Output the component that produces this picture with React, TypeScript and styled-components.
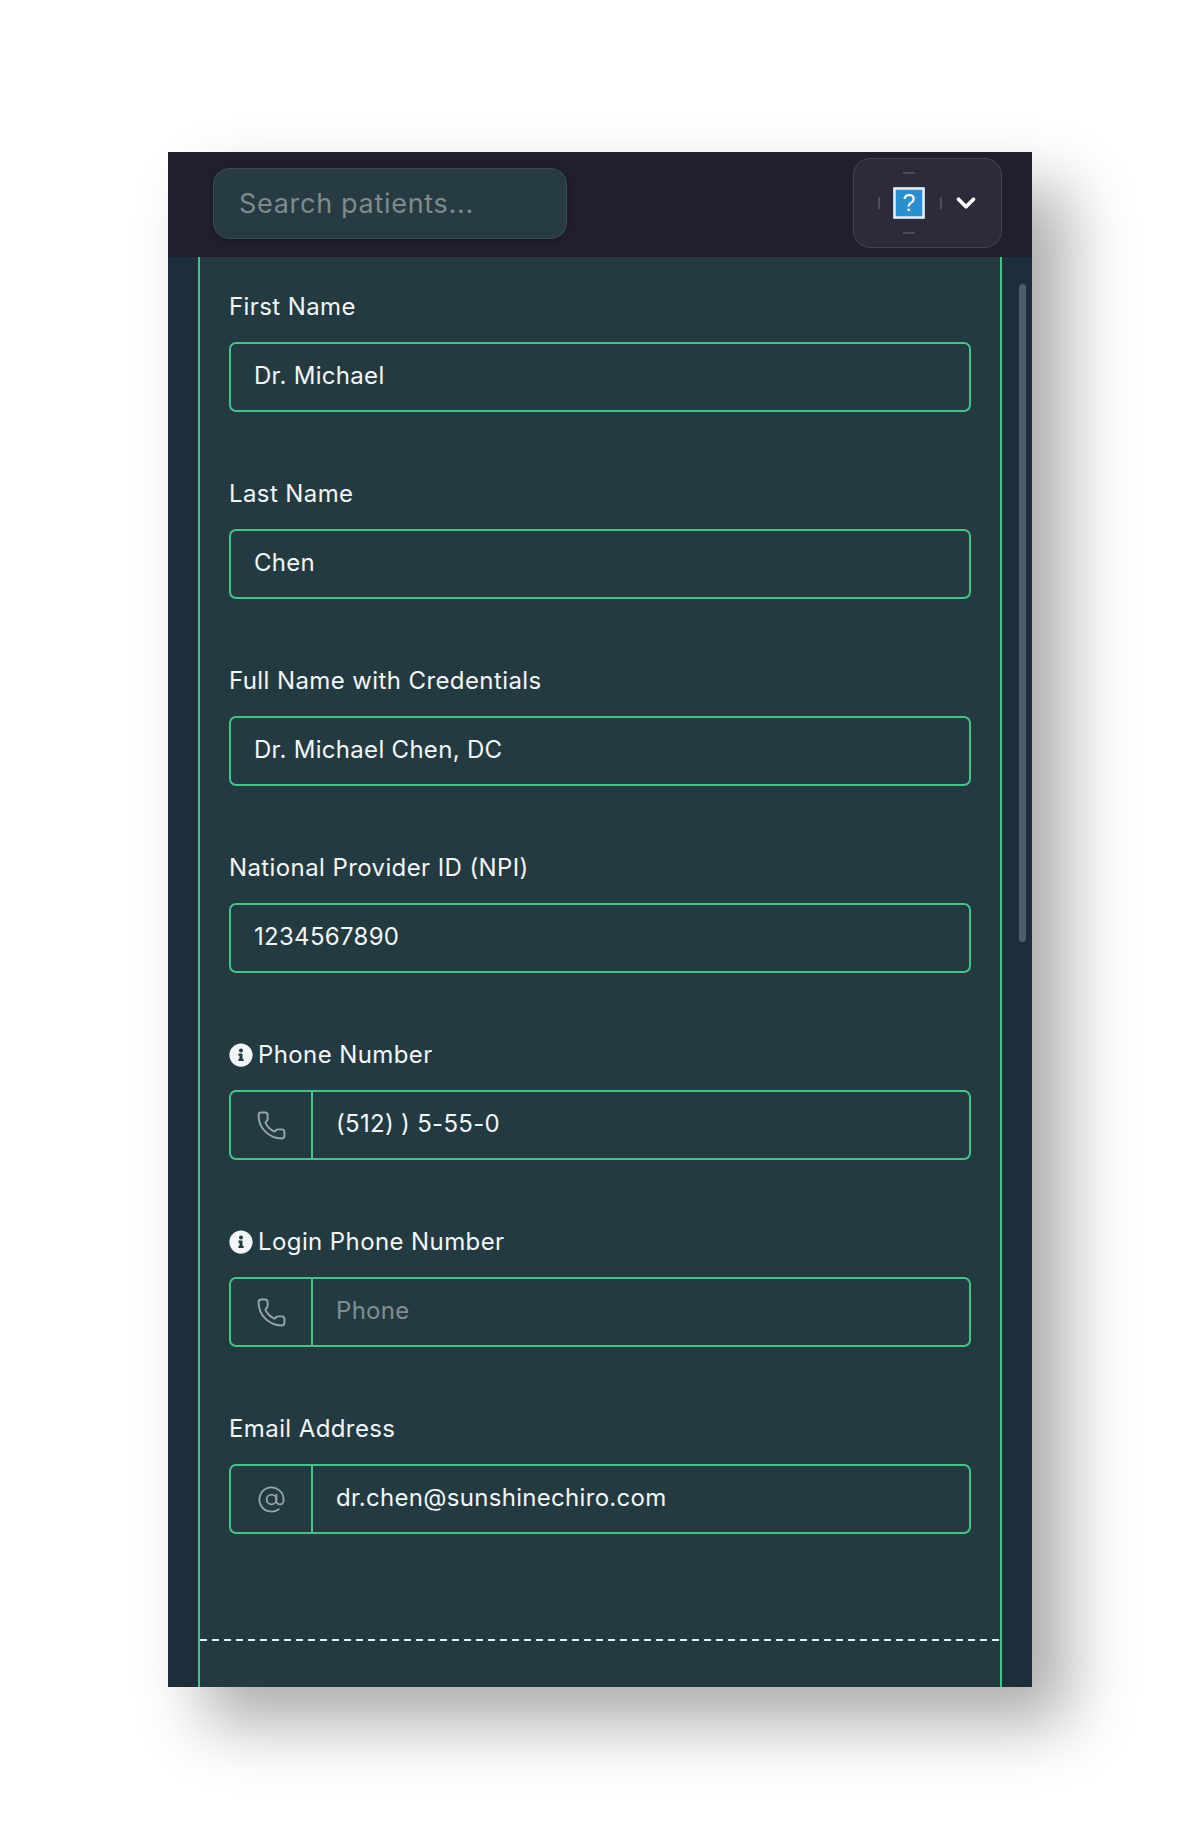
import React from "react";
import styled, { createGlobalStyle } from "styled-components";
import { Phone, AtSign, ChevronDown } from "lucide-react";
import { FaInfoCircle } from "react-icons/fa";

const Global = createGlobalStyle`
  html, body { margin: 0; padding: 0; background: #fff; }
  body { font-family: Inter, "Liberation Sans", sans-serif; }
`;
const Page = styled.div`
  width: 1200px;
  height: 1840px;
  padding: 152px 168px 0;
  box-sizing: border-box;
  overflow: hidden;
`;
const Frame = styled.div`
  width: 864px;
  height: 1535px;
  display: flex;
  flex-direction: column;
  box-shadow: 36px 36px 62px rgba(0, 0, 0, 0.33);
  background: #1b2e39;
`;
const TopBar = styled.header`
  height: 105px;
  flex: none;
  background: #1f1f2f;
  display: flex;
  align-items: center;
  justify-content: space-between;
  padding: 0 30px 0 45px;
  box-sizing: border-box;
`;
const Search = styled.input`
  width: 354px;
  height: 71px;
  margin-bottom: 2px;
  box-sizing: border-box;
  background: #263c42;
  border: 1px solid #3a4a50;
  border-radius: 16px;
  padding: 0 25px;
  color: #e8eeee;
  font: 400 27px Inter, sans-serif;
  letter-spacing: 0.7px;
  box-shadow: 0 2px 6px rgba(0, 0, 0, 0.2);
  &::placeholder { color: #808a8b; opacity: 1; }
`;
const UserButton = styled.div`
  width: 149px;
  height: 90px;
  margin-bottom: 3px;
  box-sizing: border-box;
  background: #2b2b3b;
  border: 1px solid #42424f;
  border-radius: 17px;
  display: flex;
  align-items: center;
  padding-left: 22px;
  gap: 9px;
  color: #fff;
`;
const Avatar = styled.svg`
  width: 66px;
  height: 66px;
  flex: none;
`;
const Main = styled.div`
  flex: 1;
  min-height: 0;
  display: flex;
`;
const Gutter = styled.div`
  width: 30px;
  flex: none;
  display: flex;
  justify-content: flex-end;
  padding: 27px 6px 0 0;
  box-sizing: border-box;
`;
const Thumb = styled.div`
  width: 7px;
  height: 658px;
  border-radius: 4px;
  background: #4b5e68;
`;
const Panel = styled.main`
  flex: 1;
  min-width: 0;
  background: #243a41;
  border-left: 2px solid #43c48b;
  border-right: 2px solid #43c48b;
  display: flex;
  flex-direction: column;
  padding: 32px 29px 0;
  box-sizing: border-box;
`;
const Field = styled.div`
  height: 187px;
  flex: none;
  display: flex;
  flex-direction: column;
`;
const Label = styled.label`
  height: 35px;
  margin-bottom: 18px;
  display: flex;
  align-items: center;
  gap: 5px;
  color: #f2f6f6;
  font-size: 24px;
  font-weight: 400;
  letter-spacing: 0.4px;
`;
const Box = styled.div`
  height: 70px;
  box-sizing: border-box;
  border: 2px solid #43c48b;
  border-radius: 7px;
  display: flex;
  align-items: stretch;
`;
const Adorn = styled.span`
  width: 80px;
  flex: none;
  display: flex;
  align-items: center;
  justify-content: center;
  border-right: 2px solid #43c48b;
  color: #97a6ab;
`;
const Input = styled.input`
  flex: 1;
  min-width: 0;
  background: transparent;
  border: 0;
  outline: 0;
  padding: 0 23px 3px;
  color: #f2f6f6;
  font: 400 24px Inter, sans-serif;
  letter-spacing: 0.3px;
  &::placeholder { color: #7f8e92; opacity: 1; }
`;
const Dashed = styled.div`
  margin: 41px -29px 0;
  height: 2px;
  background: repeating-linear-gradient(90deg, #e3eeea 0 7px, transparent 7px 12px);
`;

type F = { label: string; value?: string; placeholder?: string; info?: boolean; icon?: "phone" | "at" };
const fields: F[] = [
  { label: "First Name", value: "Dr. Michael" },
  { label: "Last Name", value: "Chen" },
  { label: "Full Name with Credentials", value: "Dr. Michael Chen, DC" },
  { label: "National Provider ID (NPI)", value: "1234567890" },
  { label: "Phone Number", value: "(512) ) 5-55-0", info: true, icon: "phone" },
  { label: "Login Phone Number", placeholder: "Phone", info: true, icon: "phone" },
  { label: "Email Address", value: "dr.chen@sunshinechiro.com", icon: "at" },
];

export default function App() {
  return (
    <Page>
      <Global />
      <Frame>
        <TopBar>
          <Search placeholder="Search patients..." />
          <UserButton>
            <Avatar viewBox="0 0 66 66">
              <path d="M27 3h12M27 63h12M3 27v12M65 27v12" stroke="#6a6a78" strokeWidth="1.1" fill="none" />
              <rect x="17.5" y="17.5" width="31" height="31" fill="#8ba6c4" />
              <rect x="18.5" y="18.5" width="29" height="29" fill="#2a8fcf" stroke="#e3eef7" strokeWidth="2.5" />
              <text x="33" y="41" textAnchor="middle" fill="#fff" fontFamily="Liberation Sans, sans-serif" fontSize="23">?</text>
            </Avatar>
            <ChevronDown size={30} strokeWidth={3} />
          </UserButton>
        </TopBar>
        <Main>
          <Gutter />
          <Panel>
            {fields.map((f) => (
              <Field key={f.label}>
                <Label>
                  {f.info && <FaInfoCircle size={24} />}
                  {f.label}
                </Label>
                <Box>
                  {f.icon && (
                    <Adorn>
                      {f.icon === "phone" ? <Phone size={31} strokeWidth={1.5} /> : <AtSign size={29} strokeWidth={1.5} />}
                    </Adorn>
                  )}
                  <Input readOnly value={f.value} placeholder={f.placeholder} />
                </Box>
              </Field>
            ))}
            <Dashed />
          </Panel>
          <Gutter>
            <Thumb />
          </Gutter>
        </Main>
      </Frame>
    </Page>
  );
}
